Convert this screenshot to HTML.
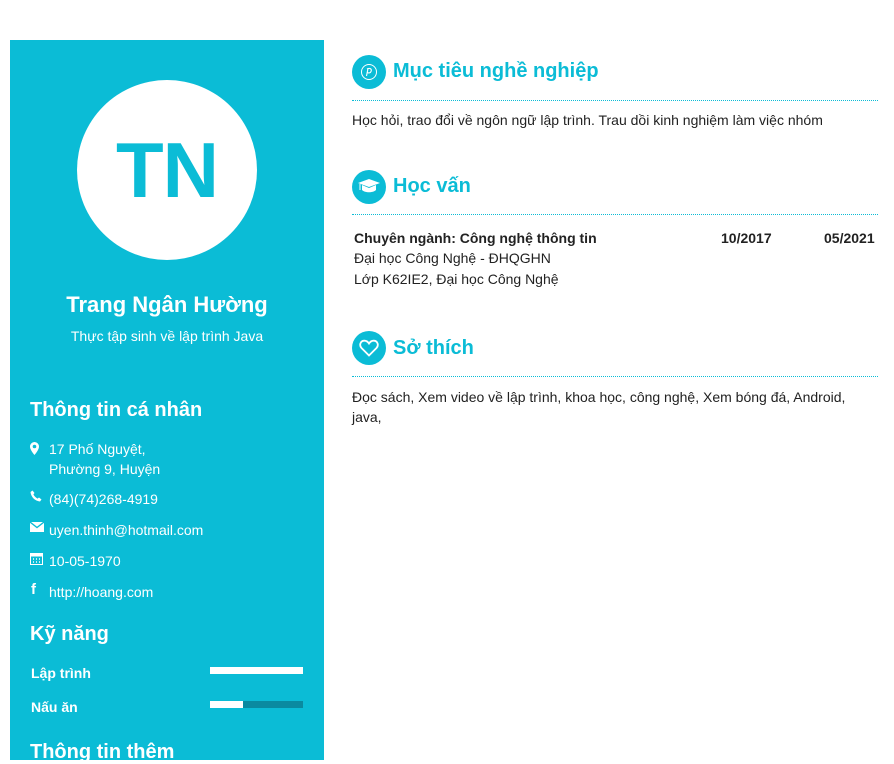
<!DOCTYPE html>
<html><head><meta charset="utf-8"><style>
*{margin:0;padding:0;box-sizing:border-box}
body{width:894px;height:750px;background:#fff;font-family:"Liberation Sans",Arial,sans-serif;position:relative;overflow:hidden;color:#222}
.sb{position:absolute;left:10px;top:40px;width:314px;height:720px;background:#0bbcd6;color:#fff}
.a{position:absolute;white-space:nowrap}
.av{position:absolute;left:77px;top:80px;width:180px;height:180px;border-radius:50%;background:#fff;color:#0bbcd6;font-weight:bold;font-size:78px;text-align:center;line-height:180px;letter-spacing:-1px}
.h{font-size:20px;font-weight:bold}
.it{font-size:14px;left:49px}
.bar{position:absolute;left:210px;width:93px;height:7px;background:#0a8aa0}
.bar i{display:block;height:100%;background:#fff}
.rh{font-size:20px;font-weight:bold;color:#0bbcd6;left:393px}
.ci{position:absolute;left:352px;width:34px;height:34px;border-radius:50%;background:#0bbcd6}
.ln{position:absolute;left:352px;width:526px;border-top:1px dotted #0bbcd6}
.t{font-size:14px;color:#222}
</style></head><body>
<div class="sb"></div>
<div class="av">TN</div>
<div class="a" style="left:10px;width:314px;text-align:center;top:292px;font-size:22px;font-weight:bold;color:#fff">Trang Ngân Hường</div>
<div class="a" style="left:10px;width:314px;text-align:center;top:328px;font-size:14px;color:#fff">Thực tập sinh về lập trình Java</div>
<div class="a h" style="left:30px;top:399px;color:#fff">Thông tin cá nhân</div>
<svg class="a" style="left:30px;top:442px" width="9" height="13" viewBox="0 0 9 13"><path d="M4.5 0A4.5 4.5 0 0 0 0 4.5C0 8 4.5 13 4.5 13S9 8 9 4.5A4.5 4.5 0 0 0 4.5 0zm0 6.3a1.8 1.8 0 1 1 0-3.6 1.8 1.8 0 0 1 0 3.6z" fill="#fff"/></svg>
<div class="a it" style="top:441px;color:#fff">17 Phố Nguyệt,</div>
<div class="a it" style="top:461px;color:#fff">Phường 9, Huyện</div>
<svg class="a" style="left:30px;top:490px" width="12" height="12" viewBox="0 0 12 12"><path d="M2.5 0.5L4.5 3 3.4 4.4C4.2 6 5.8 7.7 7.5 8.6L9 7.5 11.5 9.5 10 11.5C5 11 1 7 0.5 2z" fill="#fff"/></svg>
<div class="a it" style="top:491px;color:#fff">(84)(74)268-4919</div>
<svg class="a" style="left:30px;top:522px" width="14" height="10" viewBox="0 0 14 10"><rect width="14" height="10" fill="#fff"/><path d="M0 0L7 5.5 14 0" stroke="#0bbcd6" stroke-width="1.3" fill="none"/></svg>
<div class="a it" style="top:522px;color:#fff">uyen.thinh@hotmail.com</div>
<svg class="a" style="left:30px;top:552px" width="13" height="13" viewBox="0 0 13 13"><rect x="0.5" y="1.5" width="12" height="11" fill="none" stroke="#fff"/><rect x="0.5" y="1.5" width="12" height="3" fill="#fff"/><path d="M3 7h1M6 7h1M9 7h1M3 10h1M6 10h1M9 10h1" stroke="#fff" stroke-width="1.5"/></svg>
<div class="a it" style="top:553px;color:#fff">10-05-1970</div>
<div class="a" style="left:31px;top:581px;font-size:15px;font-weight:bold;color:#fff">f</div>
<div class="a it" style="top:584px;color:#fff">http://hoang.com</div>
<div class="a h" style="left:30px;top:623px;color:#fff">Kỹ năng</div>
<div class="a" style="left:31px;top:665px;font-size:14px;font-weight:bold;color:#fff">Lập trình</div>
<div class="bar" style="top:667px"><i style="width:100%"></i></div>
<div class="a" style="left:31px;top:699px;font-size:14px;font-weight:bold;color:#fff">Nấu ăn</div>
<div class="bar" style="top:701px"><i style="width:33px"></i></div>
<div class="a h" style="left:30px;top:741px;color:#fff">Thông tin thêm</div>

<div class="ci" style="top:55px"></div>
<svg class="a" style="left:360px;top:63px" width="18" height="18" viewBox="0 0 18 18"><circle cx="9" cy="9" r="7.5" fill="none" stroke="#fff" stroke-width="1"/><path d="M8 5.5L6.5 13M7 6c3-1.5 5 0 4 2.5-.6 1.6-2.6 1.8-3.5 1" fill="none" stroke="#fff" stroke-width="1.1"/></svg>
<div class="a rh" style="top:60px">Mục tiêu nghề nghiệp</div>
<div class="ln" style="top:100px"></div>
<div class="a t" style="left:352px;top:112px">Học hỏi, trao đổi về ngôn ngữ lập trình. Trau dồi kinh nghiệm làm việc nhóm</div>

<div class="ci" style="top:170px"></div>
<svg class="a" style="left:357px;top:178px" width="24" height="18" viewBox="0 0 24 18"><path d="M1 5L12 1 23 5 12 9z" fill="#fff"/><path d="M5 7v5c3 3 11 3 14 0V7l-7 3z" fill="#fff"/><path d="M3 6v6" stroke="#fff"/></svg>
<div class="a rh" style="top:175px">Học vấn</div>
<div class="ln" style="top:214px"></div>
<div class="a t" style="left:354px;top:230px;font-weight:bold">Chuyên ngành: Công nghệ thông tin</div>
<div class="a t" style="left:721px;top:230px;font-weight:bold">10/2017</div>
<div class="a t" style="left:824px;top:230px;font-weight:bold">05/2021</div>
<div class="a t" style="left:354px;top:250px">Đại học Công Nghệ - ĐHQGHN</div>
<div class="a t" style="left:354px;top:271px">Lớp K62IE2, Đại học Công Nghệ</div>

<div class="ci" style="top:331px"></div>
<svg class="a" style="left:359px;top:339px" width="20" height="18" viewBox="0 0 20 18"><path d="M10 16.5L2.5 9C0 6.3 1.3 2 5 1.7 7.3 1.5 9 3 10 4.5 11 3 12.7 1.5 15 1.7 18.7 2 20 6.3 17.5 9z" fill="none" stroke="#fff" stroke-width="1.8"/></svg>
<div class="a rh" style="top:337px">Sở thích</div>
<div class="ln" style="top:376px"></div>
<div class="a t" style="left:352px;top:389px">Đọc sách, Xem video về lập trình, khoa học, công nghệ, Xem bóng đá, Android,</div>
<div class="a t" style="left:352px;top:409px">java,</div>
</body></html>
